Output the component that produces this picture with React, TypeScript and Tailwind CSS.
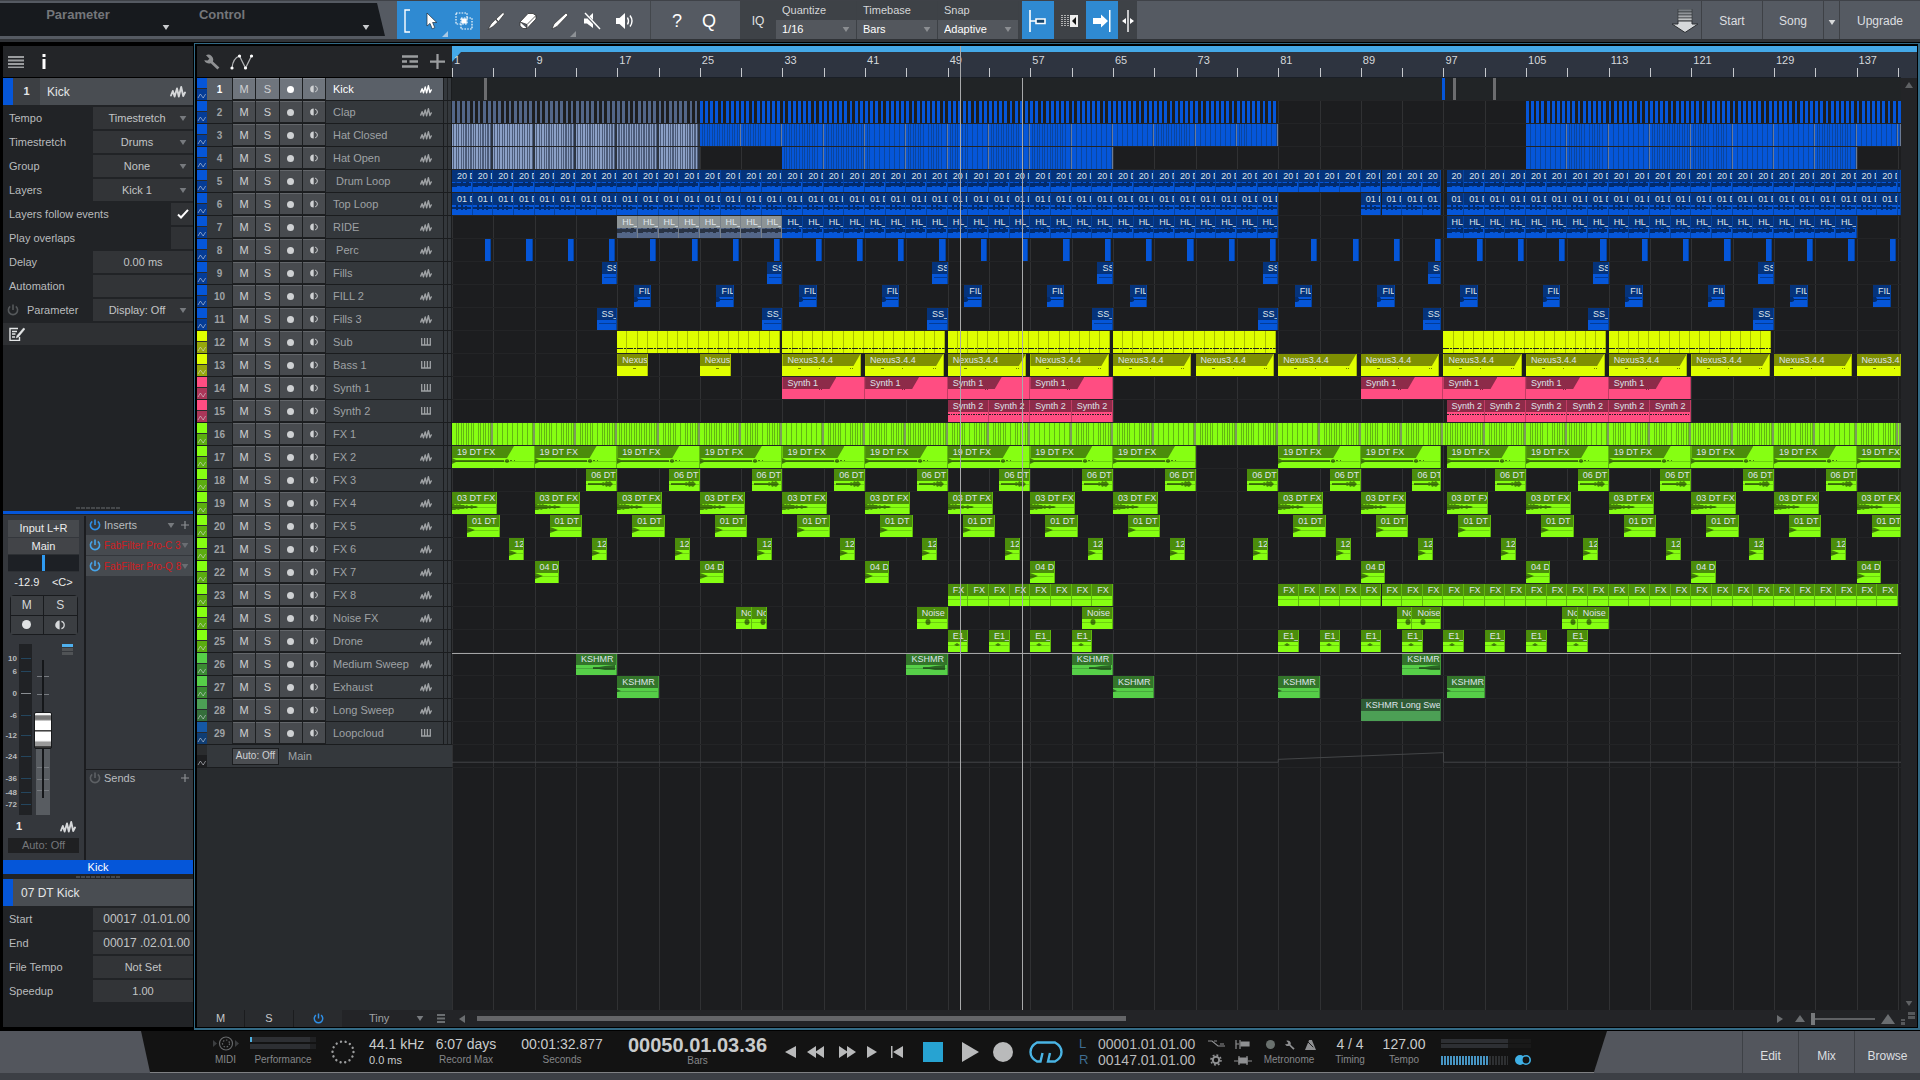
import type { ReactNode } from "react"

const TOTAL_BARS = 140.3

const pct = (bars: number) => `${(bars / TOTAL_BARS) * 100}%`

// bars at which a part repeats, "from" included, "to" not
const every = (from: number, to: number, step: number, skip: number[] = []) => {
    const out: number[] = []
    for (let b = from; b < to; b += step) {
        if (!skip.some((s) => Math.abs(s - b) < 0.01)) out.push(b)
    }
    return out
}

type Tone = { chip: string; chipDark: string; body: string; head: string; edge: string }

const tones: Record<string, Tone> = {
    blue: { chip: "bg-[#0556d9]", chipDark: "bg-[#053c96]", body: "bg-[#0556d9]", head: "bg-[#05337b]", edge: "border-[#04429f]" },
    mute: { chip: "bg-[#536688]", chipDark: "bg-[#536688]", body: "bg-[#536688]", head: "bg-[#8d9496]", edge: "border-[#77808a]" },
    yellow: { chip: "bg-[#dfff00]", chipDark: "bg-[#96a80c]", body: "bg-[#dfff00]", head: "bg-[#7e8f02]", edge: "border-[#a9c000]" },
    pink: { chip: "bg-[#ff4d82]", chipDark: "bg-[#ab3659]", body: "bg-[#ff4d82]", head: "bg-[#8d2b49]", edge: "border-[#c33c64]" },
    lime: { chip: "bg-[#86ff12]", chipDark: "bg-[#5bad10]", body: "bg-[#86ff12]", head: "bg-[#4b8d0b]", edge: "border-[#5fb80e]" },
    green: { chip: "bg-[#56cf48]", chipDark: "bg-[#3b8a33]", body: "bg-[#56cf48]", head: "bg-[#33742a]", edge: "border-[#409a36]" },
    moss: { chip: "bg-[#4c9f55]", chipDark: "bg-[#356e3b]", body: "bg-[#4c9f55]", head: "bg-[#2f5b35]", edge: "border-[#3a7a41]" },
    navy: { chip: "bg-[#1558a5]", chipDark: "bg-[#103d72]", body: "bg-[#1558a5]", head: "bg-[#103d72]", edge: "border-[#103d72]" },
}

type Clip = { at: number; len: number; label?: string; tone?: string }
type Stripe = { at: number; len: number; kind: "clap" | "clapMute" | "hat" | "hatMute" | "fx" }
type Track = {
    name: string
    tone: string
    midi?: boolean
    clips?: Clip[]
    stripes?: Stripe[]
    headW?: string
    wave?: string
}

// a run of clips, cut round the small gap before bar 97
const run = (starts: number[], len: number, label: string, tone?: string): Clip[] =>
    starts.map((s) => {
        let at = s
        let end = Math.min(s + len, TOTAL_BARS)
        if (s === 96) at = 96.3
        if (end > 95.8 && end <= 96.2 && s < 95) end = 95.8
        return { at, len: end - at, label, tone }
    })

const blocks = (from: number, to: number, kind: Stripe["kind"]): Stripe[] =>
    every(from, to, 4).map((at) => ({ at, len: Math.min(4, to - at), kind }))

const tracks: Track[] = [
    { name: "Kick", tone: "blue" },
    {
        name: "Clap", tone: "blue",
        stripes: [{ at: 0, len: 24, kind: "clapMute" }, { at: 24, len: 56, kind: "clap" }, { at: 104, len: 36.3, kind: "clap" }],
    },
    { name: "Hat Closed", tone: "blue", stripes: [...blocks(0, 24, "hatMute"), ...blocks(24, 80, "hat"), ...blocks(104, TOTAL_BARS, "hat")] },
    { name: "Hat Open", tone: "blue", stripes: [...blocks(0, 24, "hatMute"), ...blocks(32, 64, "hat"), ...blocks(104, 136, "hat")] },
    { name: " Drum Loop", tone: "blue", wave: "loop", clips: run(every(0, TOTAL_BARS, 2), 2, "20 DT") },
    { name: "Top Loop", tone: "blue", wave: "top", clips: run([...every(0, 80, 2), ...every(88, TOTAL_BARS, 2)], 2, "01 DT") },
    {
        name: "RIDE", tone: "blue", wave: "loop",
        clips: [...run(every(16, 32, 2), 2, "HL_", "mute"), ...run([...every(32, 80, 2), ...every(96, 136, 2)], 2, "HL_")],
    },
    { name: " Perc", tone: "blue", clips: every(3.2, 140, 4).map((at) => ({ at, len: 0.6 })) },
    { name: "Fills", tone: "blue", wave: "line", clips: run(every(14.5, 130, 16), 1.5, "SS_") },
    { name: "FILL 2", tone: "blue", wave: "nub", clips: run(every(17.6, 140, 8, [73.6]), 1.7, "FILL") },
    { name: "Fills 3", tone: "blue", wave: "line", clips: run(every(14, 130, 16), 2, "SS_") },
    { name: "Sub", tone: "yellow", midi: true, wave: "sub", clips: [16, 32, 48, 64, 96, 112].map((at) => ({ at, len: 15.75 })) },
    {
        name: "Bass 1", tone: "yellow", midi: true, wave: "bass", headW: "w-[78px]",
        clips: [
            { at: 16, len: 3, label: "Nexus3" },
            { at: 24, len: 3, label: "Nexus3" },
            ...every(32, TOTAL_BARS, 8).map((at) => ({ at, len: Math.min(7.6, TOTAL_BARS - at), label: "Nexus3.4.4" })),
        ],
    },
    {
        name: "Synth 1", tone: "pink", midi: true, wave: "synth1", headW: "w-[54px]",
        clips: [...every(32, 64, 8), ...every(88, 120, 8)].map((at) => ({ at, len: 8, label: "Synth 1" })),
    },
    { name: "Synth 2", tone: "pink", midi: true, wave: "synth2", clips: run([...every(48, 64, 4), ...every(96, 120, 4)], 4, "Synth 2") },
    { name: "FX 1", tone: "lime", stripes: blocks(0, TOTAL_BARS, "fx") },
    { name: "FX 2", tone: "lime", wave: "tail", headW: "w-[62px]", clips: run(every(0, 140, 8, [72]), 8, "19 DT FX") },
    { name: "FX 3", tone: "lime", wave: "rise", clips: run(every(13, 140, 8), 3, "06 DT") },
    { name: "FX 4", tone: "lime", wave: "decay", clips: run(every(0, 140, 8, [72]), 4.35, "03 DT FX") },
    { name: "FX 5", tone: "lime", wave: "hit", clips: run(every(1.45, 140, 8, [73.45]), 3.15, "01 DT") },
    { name: "FX 6", tone: "lime", wave: "hit", clips: run(every(5.55, 138, 8), 1.45, "12") },
    { name: "FX 7", tone: "lime", wave: "hit", clips: run(every(8, 140, 16, [72]), 2.35, "04 DT") },
    {
        name: "FX 8", tone: "lime", wave: "flat",
        clips: [...every(48, 64, 2), ...every(80, 140, 2)].map((at) => ({ at, len: Math.min(2, TOTAL_BARS - at), label: "FX" })),
    },
    {
        name: "Noise FX", tone: "lime", wave: "noise",
        clips: [
            ...run([27.5, 29], 1.5, "Noise"),
            ...run([45, 61], 3, "Noise"),
            ...run([91.5], 1.5, "Noise"),
            ...run([93], 2.8, "Noise"),
            ...run([107.5], 1.5, "Noise"),
            ...run([109], 3, "Noise"),
        ],
    },
    { name: "Drone", tone: "lime", wave: "bump", clips: [48, 52, 56, 60, ...every(80, 110, 4)].map((at) => ({ at, len: 2, label: "E1_" })) },
    { name: "Medium Sweep", tone: "green", wave: "wedge", clips: run([12, 44, 60, 92], 4, "KSHMR") },
    { name: "Exhaust", tone: "green", wave: "tick", clips: run([16, 64, 80, 96], 4, "KSHMR") },
    { name: "Long Sweep", tone: "moss", clips: run([88], 7.8, "KSHMR Long Sweep") },
    { name: "Loopcloud", tone: "navy", midi: true },
]

/* ---------- icons ---------- */

function AudioIcon({ className }: { className?: string }) {
    return (
        <svg viewBox="0 0 16 12" className={className} fill="none" stroke="currentColor" strokeWidth="1.9" strokeLinejoin="round" strokeLinecap="round">
            <path d="M1 9.500 2.800 5 4.600 10.500 7 2.500 8.800 10.500 11.200 1 13.200 10 15 6.500" />
        </svg>
    )
}

function KeysIcon({ className }: { className?: string }) {
    return (
        <svg viewBox="0 0 10 8" className={className} fill="none" stroke="currentColor">
            <path d="M.7 0v7h8.600V0M3.600 0v7M6.400 0v7M0 7h10" strokeWidth="1.300" />
        </svg>
    )
}

function Zig() {
    return (
        <svg viewBox="0 0 10 8" className="h-2 w-full" fill="none" stroke="#d9dde3" strokeOpacity="0.55">
            <path d="M1 6 3.4 2 6.2 6 8.6 2" />
        </svg>
    )
}

function Down({ className = "", color = "text-[#777a7e]" }: { className?: string; color?: string }) {
    return (
        <svg viewBox="0 0 8 6" className={`pointer-events-none h-[5px] w-2 shrink-0 ${color} ${className}`} fill="currentColor">
            <path d="M0 0h8L4 6z" />
        </svg>
    )
}

function Power({ className }: { className?: string }) {
    return (
        <svg viewBox="0 0 12 12" className={className} fill="none" stroke="currentColor" strokeWidth="1.6">
            <path d="M3.2 2.4a4.6 4.6 0 1 0 5.6 0M6 .5v5.6" />
        </svg>
    )
}

function Plus({ className }: { className?: string }) {
    return (
        <svg viewBox="0 0 16 16" className={className} fill="none" stroke="currentColor" strokeWidth="2.4">
            <path d="M8 0v16M0 8h16" />
        </svg>
    )
}

function Monitor({ className }: { className?: string }) {
    return (
        <svg viewBox="0 0 10 10" className={className}>
            <path d="M4.6 0.6a4.4 4.4 0 0 0 0 8.8z" fill="currentColor" />
            <path d="M6.4 1.4a3.7 3.7 0 0 1 0 7.2" fill="none" stroke="currentColor" strokeWidth="1.2" />
        </svg>
    )
}

function Wrench({ className }: { className?: string }) {
    return (
        <svg viewBox="0 0 16 16" className={className} fill="currentColor">
            <path d="M2 1.2A5 5 0 0 1 8.9 7.4L15.4 13.6 13.4 15.6 6.8 9.2A5 5 0 0 1 .2 6.2L3.6 6.6 5.4 4.8z" />
        </svg>
    )
}

/* ---------- top bar ---------- */

function Tool({ label, className = "w-8", children }: { label: string; className?: string; children: ReactNode }) {
    return (
        <button aria-label={label} className={`relative flex h-full items-center justify-center pt-0.5 text-white ${className}`}>
            {children}
        </button>
    )
}

function TopSelect({ id, label, value }: { id: string; label: string; value: string }) {
    return (
        <div className="flex h-full w-[81px] flex-col border-r border-[#3d4146]">
            <label htmlFor={id} className="flex h-[19px] items-center pl-1.5 text-[11px] leading-none text-[#d4d6d8]">{label}</label>
            <div className="relative flex h-5 items-center bg-[#53575d]">
                <select id={id} className="h-full w-full appearance-none bg-transparent pl-1.5 text-[11px] text-white outline-none">
                    <option>{value}</option>
                </select>
                <Down className="absolute right-1.5" color="text-[#8b8e92]" />
            </div>
        </div>
    )
}

function TopBar() {
    return (
        <header className="flex h-[42px] shrink-0 border-t border-b-[3px] border-t-[#3f4248] border-b-[#303337] bg-[#555a62]">
            <div className="mt-0.5 flex h-[33px] w-[385px] shrink-0 bg-[#171a1e] [clip-path:polygon(0_0,377px_0,100%_100%,0_100%)]">
                <button className="relative w-[176px] pr-5 pb-2.5 text-[13px] font-bold text-[#74767a]">
                    Parameter
                    <Down className="absolute right-1.5 bottom-1.5" color="text-[#c9cbcd]" />
                </button>
                <button className="relative w-[200px] pr-[108px] pb-2.5 text-[13px] font-bold text-[#74767a]">
                    Control
                    <Down className="absolute right-1.5 bottom-1.5" color="text-[#c9cbcd]" />
                </button>
            </div>
            <div className="ml-3 flex bg-[#2f8ad2]">
                <Tool label="Bracket" className="w-[19px]">
                    <svg viewBox="0 0 6 24" className="h-6 w-1.5" fill="none" stroke="#fff" strokeWidth="1.4"><path d="M6 1H1v22h5" /></svg>
                </Tool>
                <Tool label="Arrow tool">
                    <svg viewBox="0 0 12 18" className="h-[18px] w-3.5" fill="#fff" stroke="#1c2b3a" strokeWidth=".7"><path d="M1 1v13l3-2.6 2.2 5.4 2.6-1.1-2.2-5.2h4.2z" /></svg>
                    <svg viewBox="0 0 6 6" className="absolute right-0 bottom-0.5 size-1.5" fill="#a9c8e4"><path d="M6 0v6H0z" /></svg>
                </Tool>
                <Tool label="Range tool">
                    <svg viewBox="0 0 18 18" className="size-[18px]" fill="none" stroke="#fff" strokeWidth="1.200">
                        <path d="M1 1h11v11H1zM6 6h11v11H6z" strokeDasharray="1.600 1.200" />
                        <path d="M7 7h4v4H7z" fill="#fff" />
                    </svg>
                </Tool>
            </div>
            <Tool label="Split tool">
                <svg viewBox="0 0 18 18" className="size-[18px]" fill="#fff" stroke="#222" strokeWidth=".6"><path d="M16 .5 9 7l2.500 2.500L17.500 2zM8.300 7.600 4 12 1 17.500 6 14.500 10.800 10z" /></svg>
            </Tool>
            <Tool label="Eraser tool">
                <svg viewBox="0 0 18 18" className="size-[18px]" fill="#fff" stroke="#333" strokeWidth=".8"><path d="M9 1.500 1 10v4l3 2.500h4L17 7V3.500L14 1.500zM1 10l7 2.500V16.500M8 12.500l9-9" /></svg>
            </Tool>
            <Tool label="Paint tool">
                <svg viewBox="0 0 18 18" className="size-[18px]" fill="#fff" stroke="#222" strokeWidth=".6"><path d="M15 1 17 3 6 14.500 1 17l2-5z" /></svg>
                <svg viewBox="0 0 6 6" className="absolute right-0 bottom-0.5 size-1.5" fill="#8d9196"><path d="M6 0v6H0z" /></svg>
            </Tool>
            <Tool label="Mute tool">
                <svg viewBox="0 0 18 18" className="size-[18px]" fill="#fff" stroke="#fff"><path d="M1 6.500h3L10 1v15L4 11.500H1z" stroke="none" /><path d="M1 1l16 16" stroke="#555a62" strokeWidth="3" /><path d="M2 1l15 16" strokeWidth="1.400" /></svg>
            </Tool>
            <Tool label="Listen tool" className="w-[34px]">
                <svg viewBox="0 0 20 18" className="h-[18px] w-5" fill="none" stroke="#fff" strokeWidth="1.400"><path d="M1 6h3.500L10 1v16l-5.500-5H1z" fill="#fff" stroke="none" /><path d="M12.500 5.500q2 3.500 0 7M15 3.500q4 5.500 0 11" /></svg>
            </Tool>
            <div className="ml-2 flex w-[90px] shrink-0 items-center border-l border-[#43474c] pt-0.5 pl-2.5 text-[18px] text-white">
                <button className="w-8">?</button>
                <button className="w-8">Q</button>
            </div>
            <div className="flex bg-[#3e4247]">
                <button className="w-9 pt-0.5 text-[12px] text-[#e2e3e4]">IQ</button>
                <TopSelect id="quantize" label="Quantize" value="1/16" />
                <TopSelect id="timebase" label="Timebase" value="Bars" />
                <TopSelect id="snap" label="Snap" value="Adaptive" />
                <div className="w-[3px]" />
                <Tool label="Snap to grid" className="w-8 bg-[#2f8ad2]">
                    <svg viewBox="0 0 18 22" className="h-[22px] w-[18px]" fill="none" stroke="#fff" strokeWidth="1.600"><path d="M1 0v22M1 11h6" /><path d="M7 9h9v4.500H7z" fill="#16456b" /></svg>
                </Tool>
                <Tool label="Snap to events">
                    <svg viewBox="0 0 18 14" className="h-3.5 w-[18px]"><path d="M1 1v12M4 1v12M7 1v12" stroke="#d5d5d5" strokeDasharray="1 1" strokeWidth="1.500" /><path d="M9 1h8v12H9z" fill="#eee" /><path d="M15 3v8l-4-4z" fill="#111" /></svg>
                </Tool>
                <Tool label="Autoscroll" className="w-8 bg-[#2f8ad2]">
                    <svg viewBox="0 0 18 22" className="h-[22px] w-[18px]" fill="#fff"><path d="M0 8h8V4.500L15 11 8 17.500V14H0zM16 0h1.500v22H16z" /></svg>
                </Tool>
                <Tool label="Cursor follow" className="w-[19px]">
                    <svg viewBox="0 0 12 22" className="h-[22px] w-3" fill="#fff"><path d="M5.300 0h1.400v22H5.300zM4 8v6L0 11zM8 8v6l4-3z" /></svg>
                </Tool>
            </div>
            <div className="flex-1" />
            <button aria-label="Notifications" className="w-[34px] pt-0.5 pl-1">
                <svg viewBox="0 0 28 24" className="h-6 w-7" fill="#d6d8da" stroke="#2c2f33">
                    <path d="M7 0h14v3H7z" fill="#777c82" strokeWidth=".6" />
                    <path d="M7 3h14v3H7z" fill="#8f9398" strokeWidth=".6" />
                    <path d="M7 6h14v3H7z" fill="#a6a9ad" strokeWidth=".6" />
                    <path d="M7 9h14v3H7z" fill="#bfc2c4" strokeWidth=".6" />
                    <path d="M7 12v3H1l13 8.500L27 15h-6v-3z" />
                </svg>
            </button>
            <nav className="flex text-[12px] text-[#dddfe0]">
                <button className="w-[61px] border-l border-[#3e4146] pt-0.5">Start</button>
                <button className="w-[61px] border-l border-[#3e4146] pt-0.5">Song</button>
                <button aria-label="Song menu" className="flex w-4 items-center justify-center border-l border-[#3e4146] pt-1"><Down color="text-[#d8dadb]" /></button>
                <button className="w-[81px] border-l border-[#3e4146] pt-0.5">Upgrade</button>
            </nav>
        </header>
    )
}

/* ---------- inspector ---------- */

function InspectorRow({ id, label, value, menu, right, power }: { id: string; label: string; value: string; menu?: boolean; right?: boolean; power?: boolean }) {
    return (
        <div className="flex h-6 items-center">
            <label htmlFor={id} className="flex w-[90px] items-center pl-1.5">
                {power && <Power className="mr-2 -ml-0.5 size-3 text-[#55585b]" />}
                {label}
            </label>
            <div className="relative flex h-[22px] flex-1 items-center bg-[#323437]">
                {menu ? (
                    <select id={id} className="h-full w-full appearance-none bg-transparent pr-3 text-[#c2c4c6] outline-none [text-align-last:center]">
                        <option>{value}</option>
                    </select>
                ) : (
                    <input id={id} defaultValue={value} className={`h-full w-full bg-transparent text-[#c2c4c6] outline-none ${right ? "pr-[3px] text-right text-[12px]" : "text-center"}`} />
                )}
                {menu && <Down className="absolute right-1.5" />}
            </div>
        </div>
    )
}

function CheckRow({ id, label, checked }: { id: string; label: string; checked?: boolean }) {
    return (
        <div className="flex h-6 items-center justify-between">
            <label htmlFor={id} className="pl-1.5">{label}</label>
            <div className="relative h-[22px] w-[22px] bg-[#303235]">
                <input id={id} type="checkbox" defaultChecked={checked} className="peer block h-full w-full appearance-none" />
                <svg viewBox="0 0 12 10" className="pointer-events-none absolute top-1.5 left-1.5 hidden h-2.5 w-3 peer-checked:block" fill="none" stroke="#fff" strokeWidth="2">
                    <path d="M1 5.500 4 8.500 11 .8" />
                </svg>
            </div>
        </div>
    )
}

function Grip() {
    return <div className="h-[2px] w-11 bg-[repeating-linear-gradient(90deg,#45484b_0_4px,transparent_4px_5px)]" />
}

// top: offset inside the 171px high meter
const scale = [
    { db: "10", top: 15 }, { db: "6", top: 28 }, { db: "0", top: 50 }, { db: "-6", top: 72 }, { db: "-12", top: 92 },
    { db: "-24", top: 113 }, { db: "-36", top: 135 }, { db: "-48", top: 149 }, { db: "-72", top: 161 },
]

function Channel() {
    return (
        <div className="flex h-[345px] shrink-0 bg-[#34373c] pt-px">
            <div className="flex w-[81px] flex-col items-center pt-1">
                <button className="h-[17px] w-[71px] bg-[#46494d] text-[11px] leading-none text-[#eceded]">Input L+R</button>
                <button className="mt-px h-4 w-[71px] bg-[#424448] text-[11px] leading-none text-[#eceded]">Main</button>
                <div className="flex h-[18px] w-[71px] justify-center border-y border-[#2d3034] bg-[#1d2025]">
                    <div className="h-full w-[3px] bg-[#2f9bf2]" />
                </div>
                <div className="flex h-5 w-[71px] items-center justify-around text-[11px] text-[#eceded]">
                    <span>-12.9</span>
                    <span>&lt;C&gt;</span>
                </div>
                <div className="mt-[3px] grid h-10 w-[68px] grid-cols-2 grid-rows-2 gap-px rounded-sm border border-[#191b1e] bg-[#191b1e] text-[12px] leading-none text-[#d6d8da]">
                    <button className="bg-[#3b3e42]">M</button>
                    <button className="bg-[#3b3e42]">S</button>
                    <button aria-label="Record" className="flex items-center justify-center bg-[#3b3e42]"><span className="size-[9px] rounded-full bg-[#e0e2e3]" /></button>
                    <button aria-label="Monitor" className="flex items-center justify-center bg-[#3b3e42]"><Monitor className="size-2.5" /></button>
                </div>
                <div className="relative mt-[9px] flex h-[171px] w-full">
                    {scale.map((s) => (
                        <span key={s.db} className="absolute left-0 w-3.5 -translate-y-1/2 text-right text-[8px] leading-none font-bold text-[#b9bbbd]" style={{ top: s.top }}>{s.db}</span>
                    ))}
                    <div className="relative ml-4 h-full w-[13px] bg-[#202225]">
                        {scale.map((s) => (
                            <i key={s.db} className={`absolute left-0.5 h-px w-[10px] ${s.db === "0" ? "bg-[#8a8e92]" : "bg-[#24465e]"}`} style={{ top: s.top - 1 }} />
                        ))}
                    </div>
                    <div className="relative ml-1 flex h-full w-3.5 justify-center">
                        <div className="absolute inset-x-0 bottom-0 h-[66px] bg-[#585c61]" />
                        <svg viewBox="0 0 14 171" className="absolute inset-0" stroke="#777b80">
                            <path d="M1 32.500h12M1 50.500h12" />
                            <path d="M1 123.500h12M1 135.500h12M1 146.500h12" />
                            <path d="M7 16v138" stroke="#15171a" strokeWidth="2" />
                        </svg>
                        <input
                            type="range"
                            aria-label="Volume"
                            defaultValue={52}
                            className="absolute bottom-0 h-[164px] w-[18px] appearance-none bg-transparent [direction:rtl] [writing-mode:vertical-lr] [&::-webkit-slider-thumb]:h-[37px] [&::-webkit-slider-thumb]:w-[18px] [&::-webkit-slider-thumb]:appearance-none [&::-webkit-slider-thumb]:rounded-xs [&::-webkit-slider-thumb]:border [&::-webkit-slider-thumb]:border-[#17191b] [&::-webkit-slider-thumb]:bg-[linear-gradient(#f5f5f5_0_5%,#777_8%_18%,#fff_24%_48%,#444_48%_52%,#fff_54%_78%,#999_84%_94%,#333_96%)]"
                        />
                    </div>
                    <div className="ml-3 flex flex-col gap-px">
                        <i className="h-[3px] w-[11px] bg-[#4fb0ee]" />
                        <i className="h-[3px] w-[11px] bg-[#505356]" />
                        <i className="h-[3px] w-[11px] bg-[#505356]" />
                    </div>
                </div>
                <div className="flex h-[23px] w-full items-center justify-between pr-2 pl-[13px] text-[11px] font-bold text-[#eceded]">
                    1
                    <AudioIcon className="h-3 w-4 text-[#d5d7d9]" />
                </div>
                <button className="h-[15px] w-[71px] bg-[#1f2022] text-[11px] leading-none text-[#75777a]">Auto: Off</button>
            </div>
            <div className="flex flex-1 flex-col border-l-2 border-[#1b1c1f] text-[11px] text-[#b9bcbf]">
                <div className="flex h-[18px] items-center pr-1 pl-[3px]">
                    <Power className="mr-[3px] size-3 text-[#2f8fe6]" />
                    <span className="flex-1">Inserts</span>
                    <Down />
                    <Plus className="ml-1.5 size-2 text-[#8d9093]" />
                </div>
                {["FabFilter Pro-C 3", "FabFilter Pro-Q 8"].map((n) => (
                    <button key={n} className="relative mt-px flex h-5 items-center bg-[#464a4f] pl-[3px] whitespace-nowrap text-[#cf1e22]">
                        <Power className="mr-[3px] size-3 text-[#46a3e8]" />
                        <span className="text-[10px]">{n}</span>
                        <Down className="absolute right-1" color="text-[#6a6d72]" />
                    </button>
                ))}
                <div className="flex-1" />
                <div className="flex h-[91px] border-t border-[#1b1c1f] pr-1 pl-[3px]">
                    <Power className="mt-0.5 mr-[3px] size-3 text-[#5d6064]" />
                    <span className="flex-1">Sends</span>
                    <Plus className="mt-1 size-2 text-[#8d9093]" />
                </div>
            </div>
        </div>
    )
}

function Inspector() {
    return (
        <aside className="mt-[3px] mb-[3px] ml-[3px] flex w-[190px] shrink-0 flex-col bg-[#212326] text-[11px] text-[#b9bbbd]">
            <div className="flex h-8 items-center border-b border-black bg-[#232528] pl-[5px]">
                <svg viewBox="0 0 16 12" className="h-3 w-4" stroke="#9b9d9f" strokeWidth="2"><path d="M0 1h16M0 4.500h16M0 8h16M0 11.500h16" /></svg>
                <svg viewBox="0 0 4 15" className="ml-[18px] h-[15px] w-1" fill="#fff"><path d="M.5 0h3v3h-3zM.5 5h3v10h-3z" /></svg>
            </div>
            <div className="mb-px flex h-[27px] shrink-0 items-center bg-[#494d52]">
                <div className="h-full w-2.5 bg-[#0556d9]" />
                <div className="flex h-full w-[27px] items-center justify-center bg-[#3c3f43] text-[11px] font-bold text-[#e4e6e7]">1</div>
                <span className="flex-1 pl-[7px] text-[12px] text-[#e4e6e7]">Kick</span>
                <AudioIcon className="mr-[7px] h-3 w-4 text-[#d5d7d9]" />
            </div>
            <InspectorRow id="tempo" label="Tempo" value="Timestretch" menu />
            <InspectorRow id="stretch" label="Timestretch" value="Drums" menu />
            <InspectorRow id="group" label="Group" value="None" menu />
            <InspectorRow id="layers" label="Layers" value="Kick 1" menu />
            <CheckRow id="follow" label="Layers follow events" checked />
            <CheckRow id="overlaps" label="Play overlaps" />
            <InspectorRow id="delay" label="Delay" value="0.00 ms" />
            <InspectorRow id="automation" label="Automation" value="" />
            <InspectorRow id="param" label="Parameter" value="Display: Off" menu power />
            <div className="mt-px flex h-[22px] shrink-0 items-center bg-[#2e3033] pl-1.5">
                <svg viewBox="0 0 16 14" className="h-3.5 w-4" fill="none" stroke="#e4e6e7" strokeWidth="1.400"><path d="M9 1.500H1v12h9.500V10M3 4.500h5M3 7h3.500M3 10h3" /><path d="M14.500 1 8 8.500 7 11l2.500-1L16 2z" fill="#e4e6e7" strokeWidth=".4" /></svg>
            </div>
            <div className="flex-1" />
            <div className="flex h-1.5 items-center justify-center"><Grip /></div>
            <div className="mb-px h-[3px] bg-[#0556d9]" />
            <Channel />
            <div className="h-3.5 shrink-0 bg-[#0556d9] text-center text-[11px] leading-[14px] text-white">Kick</div>
            <div className="flex h-[5px] items-center justify-center"><Grip /></div>
            <div className="mb-px flex h-[27px] shrink-0 items-center border-l-[10px] border-[#0556d9] bg-[#494d52] pl-2 text-[12px] text-[#e4e6e7]">07 DT Kick</div>
            <InspectorRow id="start" label="Start" value="00017 .01.01.00" right />
            <InspectorRow id="end" label="End" value="00017 .02.01.00" right />
            <InspectorRow id="file-tempo" label="File Tempo" value="Not Set" />
            <InspectorRow id="speedup" label="Speedup" value="1.00" />
            <div className="h-6 shrink-0" />
        </aside>
    )
}

/* ---------- track list ---------- */

function TrackHead({ track, index }: { track: Track; index: number }) {
    const on = index === 0
    const tone = tones[track.tone]
    const btn = `flex h-full items-center justify-center border-t ${on ? "border-[#868c94] bg-[#6f757d]" : "border-[#63666a] bg-[#484b4f]"}`
    return (
        <div className="flex h-[23px] border-b border-[#1a1c1e]">
            <div className="w-2.5 shrink-0">
                <div className={`h-2.5 ${tone.chip}`} />
                <div className={`mt-px flex h-[11px] items-end ${tone.chipDark}`}><Zig /></div>
            </div>
            <div className={`flex flex-1 items-center ${on ? "bg-[#5a6068] text-white" : "bg-[#34383c] text-[#9fa2a5]"}`}>
                <span className="w-[25px] text-center text-[10px] font-bold">{index + 1}</span>
                <div className="grid h-[22px] w-[94px] grid-cols-4 gap-px border-x border-b border-[#1d1f21] bg-[#1d1f21] text-[11px] leading-none text-[#cfd1d3]">
                    <button className={btn}>M</button>
                    <button className={btn}>S</button>
                    <button aria-label="Record" className={btn}><span className={`size-[7px] rounded-full ${on ? "bg-white" : "bg-[#cfd1d3]"}`} /></button>
                    <button aria-label="Monitor" className={btn}><Monitor className="size-2" /></button>
                </div>
                <span className="flex-1 pl-[7px] text-[11px] whitespace-pre">{track.name}</span>
                {track.midi ? <KeysIcon className="mr-3 h-2 w-2.5" /> : <AudioIcon className="mr-[11px] h-[9px] w-3" />}
            </div>
            <div className="w-[9px] shrink-0 border-x border-[#1a1c1e] bg-[#34383c]">
                <div className="mx-auto h-full w-px bg-[#1f2123]" />
            </div>
        </div>
    )
}

function TrackList() {
    return (
        <div className="flex w-[255px] shrink-0 flex-col bg-[#282b2e]">
            <div className="flex h-8 items-center border-b border-black bg-[#232528] pr-[7px] pl-[7px]">
                <Wrench className="size-4 text-[#8f9193]" />
                <svg viewBox="0 0 24 16" className="ml-2.5 h-4 w-6" fill="none" stroke="#aeb0b2" strokeWidth="1.300">
                    <path d="M2 14Q3 4 9.500 2L15.500 14 21.500 2" />
                    <path d="M2 14h.01M9.500 2h.01M15.500 14h.01M21.500 2h.01" stroke="#fff" strokeWidth="3.200" strokeLinecap="round" />
                </svg>
                <div className="flex-1" />
                <svg viewBox="0 0 16 13" className="mr-3 h-[13px] w-4" stroke="#9b9d9f" strokeWidth="2.600"><path d="M0 1.500h16M0 6.500h5M7.500 6.500h8.500M0 11.500h16" /></svg>
                <Plus className="size-[15px] text-[#9b9d9f]" />
            </div>
            {tracks.map((t, i) => <TrackHead key={t.name} track={t} index={i} />)}
            <div className="flex h-[23px] items-center border-b border-[#1a1c1e] bg-[#34383c]">
                <div className="h-full w-2.5">
                    <div className="h-2.5 bg-[#2a2c2e]" />
                    <div className="flex h-3 items-end bg-[#1d1e20]"><Zig /></div>
                </div>
                <button className="ml-[25px] h-[17px] w-[47px] border border-[#1b1d1f] bg-[#4b4e52] text-[10px] leading-none text-[#cfd1d3]">Auto: Off</button>
                <span className="ml-[9px] text-[11px] text-[#9fa2a5]">Main</span>
            </div>
        </div>
    )
}

/* ---------- timeline ---------- */

function Wave({ kind }: { kind: string }) {
    const band = "M0 1h3l1-1 1 1h4v-1h2v1h3v-1h3v1h2v3h-3v1h-3v-1h-3l-1 1-1-1h-3v1H0z"
    return (
        <svg className="block h-2.5 w-full overflow-hidden" fill="#000" fillOpacity="0.5">
            {kind === "loop" && <path d={band} />}
            {kind === "top" && <path d="M0 2h4V0h2v2h3V0h2v2h2V1h2v1h4v2h-4v1h-2V4h-2v1H9V4H6v1H4V4H0z" />}
            {kind === "line" && <path d="M2 3h20v1H2z" opacity="0.6" />}
            {kind === "nub" && <path d="M0 0h3l1 2v2l-2 1H0zM3 2h14v1H3z" />}
            {kind === "bass" && <path d="M16 2h3v1h-3zM37 2h1v1h-1zM68 2h1v1h-1zM70 2h1v1h-1z" />}
            {kind === "synth1" && <path d="M37 0h1v1h-1zM39 0h1v1h-1z" />}
            {kind === "synth2" && <line x1="0" y1="2.5" x2="100%" y2="2.5" stroke="#222" strokeDasharray="2 1 1 1" />}
            {kind === "tail" && <path d="M0 0l2 1 2 1h48v2H4L0 6zM53 2l2-1 2 1v2l-2 1-2-1zM58 2h2v1h-2zM62 2h1v1h-1z" />}
            {kind === "rise" && <path d="M2 2h14l1-1 2 1 1-2 2 1 2-1 3 3-3 3-2-1-2 1-1-2-2 1-1-1H2z" />}
            {kind === "decay" && <path d="M0 0h2l1 1 2-1 1 1 2-1 1 1h3l1 1 2-1 1 1h2l2-1 1 1h3l2 1-2 1h-3l-1 1-2-1h-2l-1 1-2-1-1 1H9L8 5 6 6 5 5 3 6H0z" />}
            {kind === "hit" && <path d="M0 0l3 1 5 2-5 2-3 1z" />}
            {kind === "noise" && <ellipse cx="11" cy="3" rx="2.500" ry="3" />}
            {kind === "bump" && <path d="M6 3l3-2 3 2-3 1z" />}
            {kind === "wedge" && <path d="M17 2h6l6-1 10-1v5H29l-6-1h-6z" />}
            {kind === "tick" && <path d="M0 1l4 2-4 1z" />}
            {["tail", "rise", "decay", "hit", "flat", "noise", "bump", "tick", "wedge"].includes(kind) && (
                <rect x="0" y="3" width="100%" height="1" fillOpacity="0.18" />
            )}
        </svg>
    )
}

function ClipBox({ clip, track }: { clip: Clip; track: Track }) {
    const tone = tones[clip.tone ?? track.tone]
    const place = { left: pct(clip.at), width: pct(clip.len) }

    // the sub part has no title, only bar lines and its notes
    if (track.wave === "sub") {
        return (
            <div className={`absolute top-0 flex h-[22px] ${tone.body}`} style={place}>
                {every(0, 16, 1).map((b) => <i key={b} className="flex-1 border-r border-[#a9c000]" />)}
                <svg className="absolute inset-x-0 top-[17px] h-px w-full" stroke="#222"><line x1="0" y1="0.5" x2="100%" y2="0.5" strokeWidth="2" strokeDasharray="6 1 2 1" /></svg>
            </div>
        )
    }

    if (!clip.label) {
        return <div className={`absolute top-0 h-[22px] border-r ${tone.body} ${tone.edge}`} style={place} />
    }

    return (
        <div className={`absolute top-0 h-[22px] overflow-hidden border-r ${tone.body} ${tone.edge}`} style={place}>
            <div className={`h-3 overflow-hidden pl-[5px] text-[9px] leading-3 whitespace-nowrap text-[#dfe4ea] ${tone.head} ${track.headW ? `${track.headW} [clip-path:polygon(0_0,100%_0,calc(100%-7px)_100%,0_100%)]` : ""}`}>
                {clip.label}
            </div>
            <Wave kind={track.wave ?? ""} />
        </div>
    )
}

const stripeLook: Record<Stripe["kind"], [string, string, number, number]> = {
    // base colour, line colour, lines per bar, share of the period that the base takes
    clap: ["#0556d9", "#1c1d1f", 2, 0.55],
    clapMute: ["#536688", "#1c1d1f", 2, 0.5],
    hat: ["#0556d9", "#0a469f", 4, 0.65],
    hatMute: ["#8ba0c6", "#4c5c7a", 4, 0.5],
    fx: ["#86ff12", "#62b812", 4, 0.65],
}

const stripeEdge: Record<Stripe["kind"], string> = {
    clap: "",
    clapMute: "",
    hat: "border-r border-[#6a7a96]",
    hatMute: "border-r-2 border-[#2c3440]",
    fx: "border-r-2 border-[#7c9c5c]",
}

function StripeBox({ stripe }: { stripe: Stripe }) {
    const [base, line, perBar, share] = stripeLook[stripe.kind]
    const step = 100 / (stripe.len * perBar)
    return (
        <div
            className={`absolute top-0 h-[22px] ${stripeEdge[stripe.kind]}`}
            style={{
                left: pct(stripe.at),
                width: pct(stripe.len),
                backgroundImage: `repeating-linear-gradient(90deg, ${base} 0 ${step * share}%, ${line} ${step * share}% ${step}%)`,
            }}
        />
    )
}

function Ruler() {
    return (
        <div className="relative h-8 overflow-hidden border-b border-[#1a1f27] bg-[#2e3440]">
            <div className="h-1.5 bg-[#44a9e8]" />
            <svg viewBox="0 0 10 10" className="absolute top-1.5 left-0 size-2.5" fill="#44a9e8"><path d="M0 0h9L0 10z" /></svg>
            {every(0, TOTAL_BARS, 4).map((b) => (
                <div key={b} className="absolute bottom-0 h-[9px] border-l border-[#c6c9cd]" style={{ left: pct(b) }} />
            ))}
            {every(0, TOTAL_BARS, 8).map((b) => (
                <span key={b} className="absolute top-2 pl-0.5 text-[11px] leading-[13px] text-[#d5d8dc]" style={{ left: pct(b) }}>{b + 1}</span>
            ))}
        </div>
    )
}

const kickMarks = [
    { at: 3.1, look: "bg-[#6c6d6f]" },
    { at: 95.9, look: "bg-[#0556d9]" },
    { at: 96.9, look: "bg-[#6c6d6f]" },
    { at: 100.8, look: "bg-[#6c6d6f]" },
]

function Timeline() {
    return (
        <div className="relative flex min-w-0 flex-1 flex-col overflow-hidden bg-[#1c1d1f]">
            <Ruler />
            <div className="relative flex-1">
                {every(0, TOTAL_BARS, 4).map((b) => (
                    <div key={b} className="absolute inset-y-0 border-l border-[#303133]" style={{ left: pct(b) }} />
                ))}
                {tracks.map((t, i) => (
                    <div key={t.name} className={`relative h-[23px] border-b border-[#232426] ${i === 0 ? "bg-[#212426]" : ""}`}>
                        {t.stripes?.map((s) => <StripeBox key={s.at} stripe={s} />)}
                        {t.clips?.map((c) => <ClipBox key={c.at} clip={c} track={t} />)}
                        {i === 0 && kickMarks.map((m) => <i key={m.at} className={`absolute top-0 h-[22px] w-[3px] ${m.look}`} style={{ left: pct(m.at) }} />)}
                    </div>
                ))}
                <div className="relative h-[23px] border-b border-[#232426]">
                    <svg viewBox="0 0 1403 23" preserveAspectRatio="none" className="absolute inset-0 h-full w-full" fill="none" stroke="#434547">
                        <path d="M0 18H800V15L960 8V18H1403" vectorEffect="non-scaling-stroke" />
                    </svg>
                </div>
                <div className="absolute inset-x-0 top-[575px] h-px bg-[#a4a5a6]" />
                <div className="absolute inset-y-0 w-px bg-[#a8a9aa]" style={{ left: pct(55.2) }} />
            </div>
            <div className="absolute inset-y-0 w-px bg-[#a8a9aa]" style={{ left: pct(49.2) }} />
        </div>
    )
}

function Arrange() {
    return (
        <main className="ml-px flex min-w-0 flex-1 flex-col border border-r-2 border-b-2 border-[#336a85] bg-black pt-0.5 pr-px pb-px pl-0.5">
            <div className="flex min-h-0 flex-1">
                <TrackList />
                <Timeline />
                <div className="flex w-4 shrink-0 flex-col">
                    <div className="h-8 border-t-[6px] border-[#44a9e8] bg-[#2e3440]" />
                    <div className="flex flex-1 flex-col items-center justify-between bg-[#232427] py-1 text-[#5f6164]">
                        <svg viewBox="0 0 8 6" className="h-1.5 w-2" fill="currentColor"><path d="M4 0l4 6H0z" /></svg>
                        <Down color="text-[#5f6164]" />
                    </div>
                </div>
            </div>
            <div className="flex h-[17px] shrink-0 items-center bg-[#232427] text-[11px] text-[#c6c8ca]">
                <button className="h-full w-12 border-r border-[#1b1c1e] bg-[#292b2e] leading-none">M</button>
                <button className="h-full w-[49px] border-r border-[#1b1c1e] bg-[#292b2e] leading-none">S</button>
                <button aria-label="Power" className="flex h-full w-12 items-center justify-center bg-[#292b2e]"><Power className="size-[11px] text-[#2f8fe6]" /></button>
                <div className="relative ml-5 flex w-[62px] items-center">
                    <select aria-label="Track height" className="w-full appearance-none bg-transparent pl-[7px] text-[11px] leading-none text-[#9fa2a5] outline-none">
                        <option>Tiny</option>
                    </select>
                    <Down className="absolute right-0" />
                </div>
                <svg viewBox="0 0 8 9" className="ml-[13px] h-[9px] w-2" stroke="#6b6e71" strokeWidth="2"><path d="M0 1h8M0 4.500h8M0 8h8" /></svg>
                <svg viewBox="0 0 6 8" className="ml-3.5 h-2 w-1.5" fill="#6b6e71"><path d="M6 0v8L0 4z" /></svg>
                <div className="mx-3 h-[5px] flex-1">
                    <div className="h-full w-[50.4%] bg-[#646568]" />
                </div>
                <svg viewBox="0 0 6 8" className="h-2 w-1.5" fill="#6b6e71"><path d="M0 0v8L6 4z" /></svg>
                <svg viewBox="0 0 10 7" className="ml-3 h-[7px] w-2.5" fill="#6b6e71"><path d="M5 0l5 7H0z" /></svg>
                <input type="range" aria-label="Zoom" defaultValue={0} className="mx-1.5 h-3 w-16 appearance-none bg-[linear-gradient(#5f6164,#5f6164)] bg-[length:100%_2px] bg-center bg-no-repeat [&::-webkit-slider-thumb]:h-3 [&::-webkit-slider-thumb]:w-1 [&::-webkit-slider-thumb]:appearance-none [&::-webkit-slider-thumb]:bg-[#77797c]" />
                <svg viewBox="0 0 14 10" className="h-2.5 w-3.5" fill="#6b6e71"><path d="M7 0l7 10H0z" /></svg>
                <svg viewBox="0 0 14 13" className="mr-0.5 ml-1.5 h-[13px] w-3.5" fill="#56585b"><path d="M7 0h7v3H7zM7 4h7v3H7zM0 7h4v2H0zM0 10h4v3H0z" /></svg>
            </div>
        </main>
    )
}

/* ---------- transport ---------- */

function Readout({ value, label, className }: { value: string; label: string; className: string }) {
    return (
        <div className={`flex flex-col items-center justify-center ${className}`}>
            <span className="text-[14px] leading-[17px] whitespace-nowrap text-[#c9cbcc]">{value}</span>
            <span className="text-[10px] leading-[14px] text-[#85878a]">{label}</span>
        </div>
    )
}

function TransportButton({ label, d, w, className }: { label: string; d: string; w: number; className: string }) {
    return (
        <button aria-label={label} className={`flex shrink-0 items-center justify-center ${className}`}>
            <svg width={w} height="12" viewBox={`0 0 ${w} 12`} fill="#b9babb"><path d={d} /></svg>
        </button>
    )
}

function Transport() {
    return (
        <footer className="flex h-[50px] shrink-0 flex-col border-t border-black bg-[#53565d]">
            <div className="flex h-[41px]">
                <div className="ml-[141px] flex min-w-0 flex-1 items-center overflow-hidden bg-[#131313] pl-[60px] [clip-path:polygon(0_0,100%_0,calc(100%-13px)_100%,9px_100%)]">
                    <div className="flex w-[49px] shrink-0 flex-col items-center">
                        <svg viewBox="0 0 26 15" className="h-[15px] w-[26px]" fill="none" stroke="#66686a" strokeWidth="1.200">
                            <circle cx="13" cy="7.500" r="6.500" />
                            <circle cx="13" cy="7.500" r="3.500" strokeDasharray="1.500 1.700" />
                            <path d="M0 4v7l4-3.500zM22 4v7l4-3.500z" fill="#3c3e40" stroke="none" />
                        </svg>
                        <span className="mt-0.5 text-[10px] leading-[14px] text-[#85878a]">MIDI</span>
                    </div>
                    <div className="flex w-[66px] shrink-0 flex-col">
                        <div className="mb-0.5 h-[5px] border-r-[6px] border-l-2 border-r-[#202123] border-l-[#4fb0e0] bg-[#2d2f33]" />
                        <div className="h-[5px] border-r-[6px] border-[#202123] bg-[#2d2f33]" />
                        <span className="mt-1 text-center text-[10px] leading-[14px] text-[#85878a]">Performance</span>
                    </div>
                    <svg viewBox="0 0 24 24" className="ml-[15px] size-6 shrink-0" fill="none" stroke="#9c9d9e" strokeWidth="2.400" strokeLinecap="round">
                        <circle cx="12" cy="12" r="10.500" strokeDasharray="0.010 4.702" />
                    </svg>
                    <div className="ml-3.5 flex w-[68px] shrink-0 flex-col text-[#c9cbcc]">
                        <span className="text-[14px] leading-[17px]">44.1 kHz</span>
                        <span className="text-[11px] leading-[14px]">0.0 ms</span>
                    </div>
                    <Readout value="6:07 days" label="Record Max" className="w-[58px] shrink-0" />
                    <Readout value="00:01:32.877" label="Seconds" className="ml-[26px] w-[82px] shrink-0" />
                    <div className="ml-[25px] flex w-[139px] shrink-0 flex-col items-center">
                        <span className="text-[20px] leading-[19px] font-bold text-[#c9cbcc]">00050.01.03.36</span>
                        <span className="text-[10px] leading-[12px] text-[#85878a]">Bars</span>
                    </div>
                    <TransportButton label="Previous" w={11} d="M11 0v12L0 6z" className="ml-3 w-[22px]" />
                    <TransportButton label="Rewind" w={17} d="M9 0v12L0 6zM17 0v12L8 6z" className="w-7" />
                    <TransportButton label="Forward" w={17} d="M0 0v12l9-6zM8 0v12l9-6z" className="ml-1 w-7" />
                    <TransportButton label="Next" w={10} d="M0 0v12l10-6z" className="w-[22px]" />
                    <TransportButton label="To start" w={12} d="M0 0h1.500v12H0zM12 0v12L2 6z" className="ml-[3px] w-[22px]" />
                    <button aria-label="Stop" className="ml-[15px] size-5 shrink-0 bg-[#27a3d2]" />
                    <button aria-label="Play" className="ml-[19px] shrink-0"><svg viewBox="0 0 17 20" className="h-5 w-[17px]" fill="#b9babb"><path d="M0 0v20l17-10z" /></svg></button>
                    <button aria-label="Record" className="ml-3.5 size-5 shrink-0 rounded-full bg-[#b9babb]" />
                    <button aria-label="Loop" className="ml-4 shrink-0">
                        <svg viewBox="0 0 34 22" className="h-[22px] w-[34px]" fill="none" stroke="#4ab4e4" strokeWidth="2.400">
                            <path d="M13.500 12 11.500 20.500H8Q1.500 17 1.500 11T8 1.500H26Q32.500 5 32.500 11T26 20.500H19L21 12" />
                        </svg>
                    </button>
                    <div className="ml-4 flex w-3 shrink-0 flex-col text-[13px] leading-4 text-[#3e6d92]"><span>L</span><span>R</span></div>
                    <div className="ml-[7px] flex w-[98px] shrink-0 flex-col text-[14px] leading-4 text-[#b9babb]"><span>00001.01.01.00</span><span>00147.01.01.00</span></div>
                    <svg viewBox="0 0 44 32" className="ml-3 h-8 w-11 shrink-0" fill="none" stroke="#8f9092" strokeWidth="1.200">
                        <path d="M0 5h4l6 5h7M6 5h3M12 8l4 0" />
                        <path d="M28 4v9M28 8h3M32 4v9" />
                        <path d="M33 6h8v4h-8z" fill="#8f9092" />
                        <circle cx="8" cy="24" r="3.200" strokeWidth="2" />
                        <circle cx="8" cy="24" r="5" strokeWidth="1.600" strokeDasharray="1.900 2" />
                        <path d="M26 25h4M40 25h4M31 20v9M39 20v9" />
                        <path d="M31 22h8v5h-8z" fill="#8f9092" />
                    </svg>
                    <div className="ml-2.5 flex w-[54px] shrink-0 flex-col items-center">
                        <div className="flex h-[17px] w-full items-center justify-between pl-1 text-[#8f9092]">
                            <i className="size-[9px] rounded-full bg-[#6a716e]" />
                            <Wrench className="size-2.5" />
                            <svg viewBox="0 0 12 12" className="size-[11px]" fill="currentColor"><path d="M4.500 1h3L12 12H0z" /><path d="M1 1l8 8" stroke="#131313" /></svg>
                        </div>
                        <span className="text-[10px] leading-[14px] text-[#85878a]">Metronome</span>
                    </div>
                    <Readout value="4 / 4" label="Timing" className="ml-[17px] w-[34px] shrink-0" />
                    <Readout value="127.00" label="Tempo" className="ml-4 w-[42px] shrink-0" />
                    <div className="ml-4 flex shrink-0 flex-col">
                        <div className="h-1 w-[90px] border-r-[23px] border-[#191919] bg-[#2d2f33]" />
                        <div className="mt-px h-1 w-[90px] border-r-[23px] border-[#191919] bg-[#2d2f33]" />
                        <div className="mt-2 flex h-[9px] items-center">
                            <div className="h-full w-12 bg-[repeating-linear-gradient(90deg,#4795c4_0_2px,#131313_2px_3px)]" />
                            <div className="h-full w-[19px] bg-[repeating-linear-gradient(90deg,#2e3032_0_2px,#131313_2px_3px)]" />
                            <svg viewBox="0 0 16 10" className="ml-[7px] h-2.5 w-4" fill="none" stroke="#3fb0e6" strokeWidth="1.600"><circle cx="5" cy="5" r="4.200" fill="#3fb0e6" /><circle cx="11" cy="5" r="4.200" fill="#131313" /></svg>
                        </div>
                    </div>
                </div>
                <nav className="-mb-[9px] ml-[135px] flex shrink-0 text-[12px] text-[#dddfe0]">
                    <button className="w-14 border-l border-[#3e4146]">Edit</button>
                    <button className="w-14 border-l border-[#3e4146]">Mix</button>
                    <button className="w-[66px] border-l border-[#3e4146]">Browse</button>
                </nav>
            </div>
            <div className="mr-[326px] ml-[150px] h-px bg-[#808184]" />
            <div className="flex-1 bg-[#3c3f45]" />
        </footer>
    )
}

export default function App() {
    return (
        <div className="flex h-screen w-full flex-col overflow-hidden bg-black font-['Liberation_Sans',Arial,sans-serif]">
            <TopBar />
            <div className="mt-px flex min-h-0 flex-1">
                <Inspector />
                <Arrange />
            </div>
            <Transport />
        </div>
    )
}
